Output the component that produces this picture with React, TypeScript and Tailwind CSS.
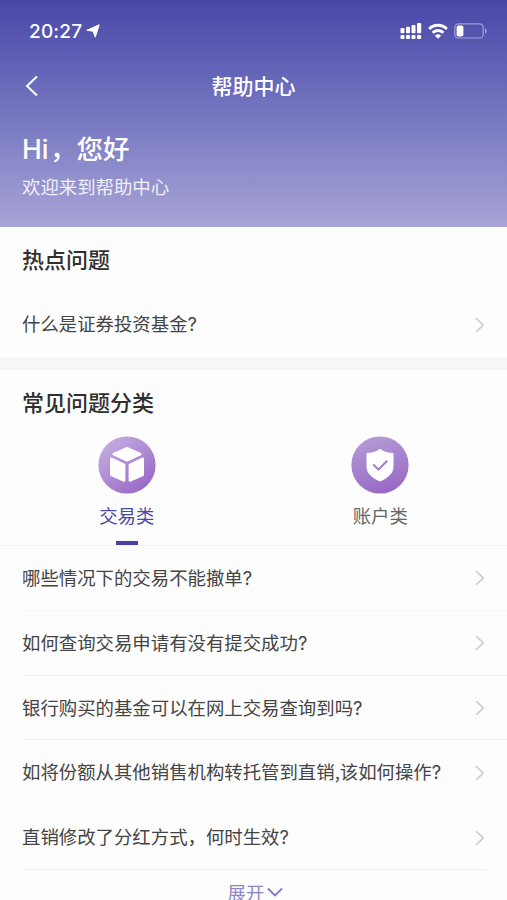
import React, { useState } from 'react';
import clsx from 'clsx';

const questions = [
  { title: '哪些情况下的交易不能撤单', line: 'right-0 bg-[#f6f6f6]' },
  { title: '如何查询交易申请有没有提交成功', line: 'right-0 bg-[#f2f2f2]' },
  { title: '银行购买的基金可以在网上交易查询到吗', line: 'right-0 bg-[#f2f2f2]' },
  { title: '如将份额从其他销售机构转托管到直销,该如何操作', line: 'right-0 bg-[#fafafa]' },
  { title: '直销修改了分红方式，何时生效', line: 'right-[21px] bg-[#f2f2f2]' },
];

const ChevronRight = () => (
  <svg className="w-[10px] h-4 shrink-0" viewBox="0 0 10 16" fill="none" stroke="#c9c9c9" strokeWidth="1.6">
    <path d="M1.2 1.2 8.2 8 1.2 14.8" />
  </svg>
);

const StatusBar = () => (
  <div className="flex items-center justify-between h-[62px] pl-[29px] pr-[20px]">
    <div className="flex items-center gap-[4px]">
      <span className="font-['Inter','Noto_Sans_CJK_SC',sans-serif] text-[19px] font-medium leading-none tracking-[0.2px]">20:27</span>
      <svg className="w-[14px] h-[14px]" viewBox="0 0 14 14" fill="#fff">
        <path d="M13.2.8.8 6.3l6.2.9 2.3 6z" stroke="#fff" strokeWidth="1" strokeLinejoin="round" />
      </svg>
    </div>
    <div className="flex items-center gap-[6px]">
      <svg className="w-[22px] h-[18px]" viewBox="0 0 22 18" fill="#fff">
        <rect x="0.5" y="6" width="4" height="5.3" rx="1" />
        <rect x="6" y="4.8" width="4" height="6.5" rx="1" />
        <rect x="11.5" y="3" width="4" height="8.3" rx="1" />
        <rect x="17" y="1" width="4.2" height="10.3" rx="1" />
        <rect x="0.5" y="13" width="4" height="4" rx="1" />
        <rect x="6" y="13" width="4" height="4" rx="1" />
        <rect x="11.5" y="13" width="4" height="4" rx="1" />
        <rect x="17" y="13" width="4.2" height="4" rx="1" />
      </svg>
      <svg className="w-[20px] h-[16px]" viewBox="0 0 20 16" fill="none" stroke="#fff" strokeWidth="2.9">
        <path d="M1.2 5.9a12.4 12.4 0 0 1 17.6 0" />
        <path d="M4.6 9.8a7.6 7.6 0 0 1 10.8 0" />
        <path d="M10 15.8 6.9 12.7a4.6 4.6 0 0 1 6.2 0z" fill="#fff" stroke="none" />
      </svg>
      <svg className="w-[33px] h-[16px]" viewBox="0 0 33 16">
        <rect x=".8" y=".8" width="28.4" height="14.2" rx="3.6" fill="none" stroke="#fff" strokeOpacity=".45" strokeWidth="1.2" />
        <rect x="2.6" y="2.6" width="6.8" height="10.8" rx="1.8" fill="#fff" />
        <path d="M31 5.3c2 .7 2 4.5 0 5.2z" fill="#fff" fillOpacity=".5" />
      </svg>
    </div>
  </div>
);

const CubeIcon = () => (
  <svg className="w-[58px] h-[58px]" viewBox="0 0 58 58">
    <defs>
      <linearGradient id="cube-bg" x1="0.1" y1="0" x2="0.9" y2="1">
        <stop offset="0" stopColor="#c5b2e2" />
        <stop offset="1" stopColor="#9862c3" />
      </linearGradient>
    </defs>
    <circle cx="29" cy="29" r="28.6" fill="url(#cube-bg)" />
    <g fill="#fff" stroke="#fff" strokeWidth="2.4" strokeLinejoin="round">
      <path d="M29 12 42.4 18.2 29 24.400 15.600 18.200z" />
      <path d="M13.200 22.600 26.200 28.900v15.700L13.200 38.800z" />
      <path d="M44.800 22.600 31.800 28.900v15.700L44.800 38.800z" />
    </g>
  </svg>
);

const ShieldIcon = () => (
  <svg className="w-[58px] h-[58px]" viewBox="0 0 58 58">
    <defs>
      <linearGradient id="shield-bg" x1="0.3" y1="0" x2="0.6" y2="1">
        <stop offset="0" stopColor="#b49bd8" />
        <stop offset="1" stopColor="#9868c4" />
      </linearGradient>
    </defs>
    <circle cx="29" cy="29" r="28.6" fill="url(#shield-bg)" />
    <path
      d="M29 13.2c4 3.2 8.3 4.2 13 4.2v13.2c0 7-5.6 11.4-13 14.4-7.4-3-13-7.4-13-14.4V17.4c4.7 0 9-1 13-4.2z"
      fill="#fff"
      stroke="#fff"
      strokeLinejoin="round"
    />
    <path d="M22.2 28.4 27.4 33.6 36.2 24.8" fill="none" stroke="#9d7bca" strokeWidth="2" />
  </svg>
);

const tabs = [
  { title: '交易类', icon: CubeIcon },
  { title: '账户类', icon: ShieldIcon },
];

const App: React.FC = () => {
  const [activeTab, setActiveTab] = useState(0);

  return (
    <div className="w-full h-[900px] overflow-hidden flex flex-col bg-[#fdfdfd] text-[#444] font-['Noto_Sans_CJK_SC',sans-serif]">
      <header className="h-[227px] shrink-0 bg-linear-to-b from-[#4946a8] to-[#a8a4d6] text-white">
        <StatusBar />
        <div className="grid grid-cols-3 items-center h-[48px] px-[25px]">
          <svg className="w-[13px] h-[22px]" viewBox="0 0 13 22" fill="none" stroke="#fff" strokeWidth="2">
            <path d="M12 1.5 2 11l10 9.5" />
          </svg>
          <h1 className="text-[21px] font-medium leading-none text-center whitespace-nowrap pb-[2px]">帮助中心</h1>
        </div>
        <div className="px-[22px] pt-[21px]">
          <div className="text-[26.5px] leading-[34px] font-medium">
            <span className="font-['Inter','Noto_Sans_CJK_SC',sans-serif] mr-[1.5px]">Hi</span>，您好
          </div>
          <div className="text-[18.4px] leading-[26px] mt-[7px] text-white/85">欢迎来到帮助中心</div>
        </div>
      </header>

      <section className="h-[130px] shrink-0 px-[22px]">
        <h2 className="text-[22px] leading-[32px] pt-[15px] font-medium text-[#2f2f2f]">热点问题</h2>
        <div className="flex items-center justify-between h-[65px] mt-[18px]">
          <span className="text-[18.4px]">什么是证券投资基金<span className="font-['Inter']">?</span></span>
          <ChevronRight />
        </div>
      </section>

      <div className="h-[13px] shrink-0 bg-[#f6f6f6]" />

      <section className="shrink-0">
        <h2 className="px-[22px] pt-[15px] text-[22px] leading-[32px] font-medium text-[#2f2f2f]">常见问题分类</h2>
        <div className="grid grid-cols-2 h-[129px] pt-[19px] border-b border-[#f3f3f3]">
          {tabs.map((tab, idx) => (
            <button key={tab.title} onClick={() => setActiveTab(idx)} className="flex flex-col items-center">
              <tab.icon />
              <span
                className={clsx(
                  'text-[18.4px] leading-[26px] mt-[8px]',
                  activeTab === idx ? 'text-[#4b48a8]' : 'text-[#666]'
                )}
              >
                {tab.title}
              </span>
              {activeTab === idx && <span className="w-[22px] h-[4px] mt-[13px] bg-[#4542a5]" />}
            </button>
          ))}
        </div>
      </section>

      <ul className="shrink-0">
        {questions.map(q => (
          <li key={q.title} className="relative flex items-center justify-between h-[64.8px] px-[22px]">
            <span className="text-[18.4px] whitespace-nowrap">
              {q.title}<span className="font-['Inter']">?</span>
            </span>
            <ChevronRight />
            <span className={clsx('absolute left-[23px] bottom-0 h-px', q.line)} />
          </li>
        ))}
      </ul>

      <button className="flex items-center justify-center gap-[3px] h-[44px] pl-[4px] shrink-0 text-[18.4px] leading-[18px] text-[#8d86c8]">
        展开
        <svg className="w-4 h-[10px]" viewBox="0 0 16 10" fill="none" stroke="#7f78c2" strokeWidth="1.8">
          <path d="M1 1.5 8 8.5l7-7" />
        </svg>
      </button>
    </div>
  );
};

export default App;
